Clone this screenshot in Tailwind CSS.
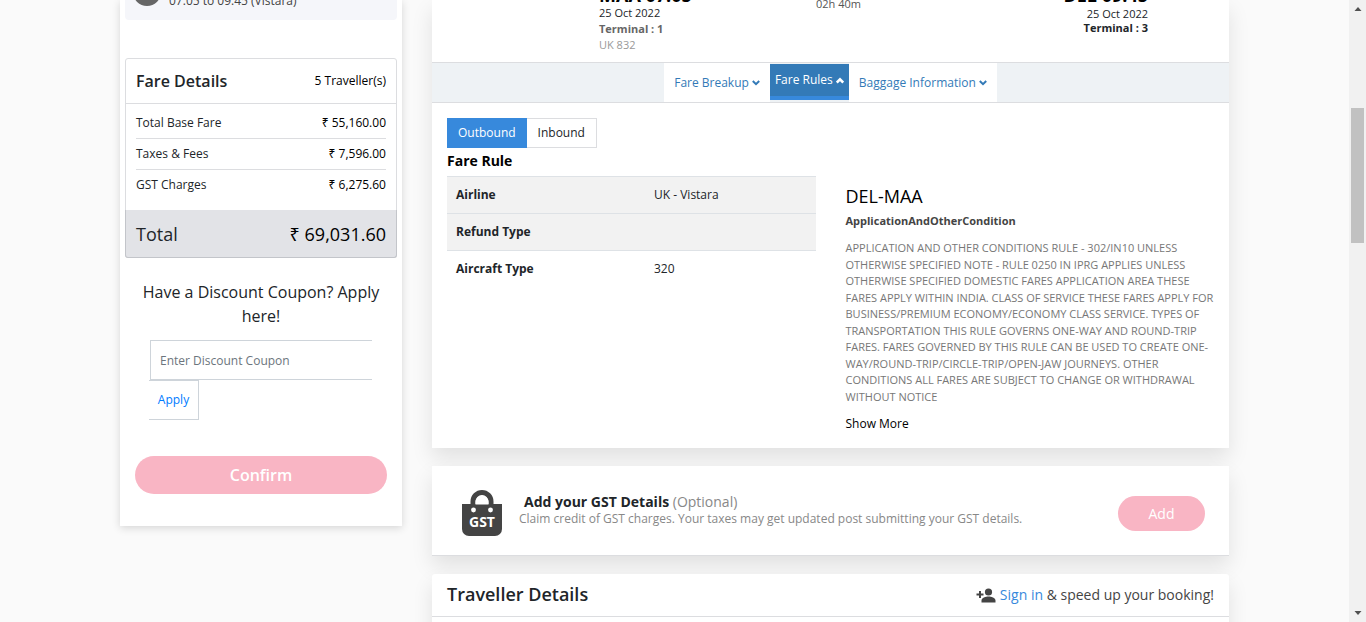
<!DOCTYPE html>
<html lang="en">
<head>
<meta charset="utf-8">
<meta name="viewport" content="width=device-width, initial-scale=1">
<title>Review your booking</title>
<script src="https://cdn.jsdelivr.net/npm/@tailwindcss/browser@4"></script>
</head>
<body class="flex h-screen overflow-hidden bg-[#fafafa] font-['Open_Sans','Noto_Sans',sans-serif] text-xs leading-4 text-[#212529]">
<main class="h-full min-w-0 flex-1 overflow-hidden">
  <div class="mx-auto flex max-w-[1109px] items-start gap-[30px]">

    <!-- Booking summary -->
    <aside class="w-[282px] shrink-0 bg-white px-[5px] pb-8 shadow-[0_2px_8px_rgba(0,0,0,0.15)]">
      <div class="flex h-5 items-end gap-2 overflow-hidden rounded-b-sm bg-[#f5f6fa] px-2">
        <span class="mb-[14px] size-7 shrink-0 rounded-full bg-[#666]"></span>
        <p class="mb-[11px] text-[#444]">07:05 to 09:45 (Vistara)</p>
      </div>

      <section class="mt-[38px] rounded-[3px] border border-[#dcdde0]">
        <header class="flex h-[45px] items-center justify-between border-b border-[#dcdde0] px-[10px]">
          <h2 class="text-base font-semibold">Fare Details</h2>
          <span class="text-black">5 Traveller(s)</span>
        </header>
        <dl class="px-[10px] pt-1 pb-[10px]">
          <div class="flex h-[31px] items-center justify-between border-b border-[#dcdde0]"><dt>Total Base Fare</dt><dd class="text-black">₹ 55,160.00</dd></div>
          <div class="flex h-[31px] items-center justify-between border-b border-[#dcdde0]"><dt>Taxes &amp; Fees</dt><dd class="text-black">₹ 7,596.00</dd></div>
          <div class="flex h-[30px] items-center justify-between"><dt>GST Charges</dt><dd class="text-black">₹ 6,275.60</dd></div>
        </dl>
        <div class="-mx-px -mb-px flex h-12 items-center justify-between rounded-b-[3px] border border-t-0 border-[#c3c5ca] bg-[#e2e3e7] px-[10px] text-lg">
          <span>Total</span><span class="text-black">₹ 69,031.60</span>
        </div>
      </section>

      <form class="px-[10px]">
        <label for="coupon" class="mt-[22px] block text-center text-base">Have a Discount Coupon? Apply here!</label>
        <div class="mt-3 px-[15px]">
          <input id="coupon" type="text" placeholder="Enter Discount Coupon" class="block h-10 w-full border border-r-0 border-[#ced4da] bg-white px-[9px] text-xs placeholder:text-[#6c757d]">
          <button type="button" class="-ml-px block h-10 w-[50px] border border-l-0 border-[#ced4da] bg-white text-xs text-[#007bff]">Apply</button>
        </div>
        <button type="button" class="mt-9 block h-[38px] w-full rounded-full bg-[#f9b5c4] text-base font-semibold text-white">Confirm</button>
      </form>
    </aside>

    <div class="flex min-w-0 flex-1 flex-col gap-[18px]">

      <!-- Flight and its fare rules -->
      <section class="bg-white pb-4 shadow-[0_10px_20px_rgba(0,0,0,0.1)]">
        <div class="flex h-[62px] items-end overflow-hidden pr-[81px] pl-[167px] text-[11px]">
          <div class="w-[217px] pb-[9px]">
            <p class="text-lg leading-5 font-bold text-black">MAA 07:05</p>
            <p>25 Oct 2022</p>
            <p class="font-bold text-[#666]">Terminal : 1</p>
            <p class="text-[#999]">UK 832</p>
          </div>
          <p class="pb-[50px] text-[#555]">02h 40m</p>
          <div class="ml-auto pb-[27px] text-right">
            <p class="text-lg leading-6 font-bold text-black">DEL 09:45</p>
            <p class="leading-[14px]">25 Oct 2022</p>
            <p class="leading-[14px] font-bold">Terminal : 3</p>
          </div>
        </div>

        <div class="flex h-[41px] justify-center border-y border-[#dcdde0] bg-[#eef2f5] text-[#337ab7]">
          <button type="button" class="flex items-center gap-[3px] bg-white px-[10px]">Fare Breakup
            <svg class="size-2" viewBox="0 0 8 8" fill="none" stroke="currentColor" stroke-width="2"><path d="M.8 2 4 5.2 7.2 2"/></svg>
          </button>
          <button type="button" class="mt-px mb-0.5 flex items-center gap-[3px] border-b-4 border-[#3789dc] bg-[#337ab7] px-[5px] text-white">Fare Rules
            <svg class="size-2" viewBox="0 0 8 8" fill="none" stroke="currentColor" stroke-width="2.500"><path d="M.8 6.500 4 3.300 7.200 6.500"/></svg>
          </button>
          <button type="button" class="flex items-center gap-[3px] bg-white px-[10px]">Baggage Information
            <svg class="size-2" viewBox="0 0 8 8" fill="none" stroke="currentColor" stroke-width="2"><path d="M.8 2 4 5.2 7.2 2"/></svg>
          </button>
        </div>

        <div class="px-[15px] pt-[15px]">
          <div class="flex h-[30px]">
            <button type="button" class="bg-[#3789dc] px-[11px] text-white">Outbound</button>
            <button type="button" class="border border-l-0 border-[#dcdde0] px-[11px]">Inbound</button>
          </div>
          <div class="grid grid-cols-2 gap-[30px]">
            <div>
              <h3 class="pb-0.5 text-sm leading-[26px] font-bold text-black">Fare Rule</h3>
              <table class="w-full table-fixed border-collapse text-left">
                <tbody>
                  <tr class="h-[37px] border-t border-[#dee2e6] bg-[#f2f2f2]"><th scope="row" class="w-[198px] px-[9px] font-bold">Airline</th><td class="px-[9px]">UK - Vistara</td></tr>
                  <tr class="h-[37px] border-t border-[#dee2e6] bg-[#f2f2f2]"><th scope="row" class="px-[9px] font-bold">Refund Type</th><td></td></tr>
                  <tr class="h-[37px] border-t border-[#dee2e6]"><th scope="row" class="px-[9px] font-bold">Aircraft Type</th><td class="px-[9px]">320</td></tr>
                </tbody>
              </table>
            </div>
            <div class="pt-9">
              <h3 class="text-lg leading-6 text-black">DEL-MAA</h3>
              <h4 class="mt-[5px] text-[11px] font-bold text-[#444]">ApplicationAndOtherCondition</h4>
              <p class="mt-[11px] text-[11px] leading-normal text-[#777]">APPLICATION AND OTHER CONDITIONS RULE - 302/IN10 UNLESS OTHERWISE SPECIFIED NOTE - RULE 0250 IN IPRG APPLIES UNLESS OTHERWISE SPECIFIED DOMESTIC FARES APPLICATION AREA THESE FARES APPLY WITHIN INDIA. CLASS OF SERVICE THESE FARES APPLY FOR BUSINESS/PREMIUM ECONOMY/ECONOMY CLASS SERVICE. TYPES OF TRANSPORTATION THIS RULE GOVERNS ONE-WAY AND ROUND-TRIP FARES. FARES GOVERNED BY THIS RULE CAN BE USED TO CREATE ONE-WAY/ROUND-TRIP/CIRCLE-TRIP/OPEN-JAW JOURNEYS. OTHER CONDITIONS ALL FARES ARE SUBJECT TO CHANGE OR WITHDRAWAL WITHOUT NOTICE</p>
              <a href="#" class="mt-[11px] block text-black">Show More</a>
            </div>
          </div>
        </div>
      </section>

      <!-- GST details -->
      <section class="flex h-[90px] items-center border-b border-[#dcdde0] bg-white pr-6 pl-[30px] shadow-[0_10px_20px_rgba(0,0,0,0.1)]">
        <svg class="mt-1 h-[46px] w-10 shrink-0" viewBox="0 0 40 46" role="img" aria-label="GST">
          <path d="M11 18v-6.500a9 9 0 0 1 18 0V18" fill="none" stroke="#444" stroke-width="5"/>
          <path d="M0 14h40v25a7 7 0 0 1-7 7H7a7 7 0 0 1-7-7z" fill="#444"/>
          <path d="M13.500 14.500V12a6.500 6.500 0 0 1 13 0v2.500z" fill="#fff"/>
          <circle cx="11.500" cy="20" r="2.400" fill="#fff"/><circle cx="28.500" cy="20" r="2.400" fill="#fff"/>
          <text x="20" y="37" text-anchor="middle" font-family="Open Sans" font-weight="700" font-size="14" fill="#fff">GST</text>
        </svg>
        <div class="ml-[17px] flex-1 pb-0.5">
          <h3 class="pl-[5px] text-sm leading-[18px] font-bold">Add your GST Details <span class="font-normal text-[#888]">(Optional)</span></h3>
          <p class="text-[#888]">Claim credit of GST charges. Your taxes may get updated post submitting your GST details.</p>
        </div>
        <button type="button" class="mt-1.5 h-[35px] w-[87px] rounded-full bg-[#f9b5c4] text-sm text-white">Add</button>
      </section>

      <!-- Travellers -->
      <section class="h-24 rounded-t-[3px] bg-white shadow-[0_10px_20px_rgba(0,0,0,0.1)]">
        <header class="flex h-[43px] items-center justify-between border-b border-[#dcdde0] px-[15px]">
          <h2 class="pb-0.5 text-lg leading-6 font-semibold">Traveller Details</h2>
          <p class="flex items-center gap-1 text-sm text-[#444]">
            <svg class="h-4 w-5" viewBox="0 0 20 16" fill="#444"><circle cx="12.500" cy="5" r="3.600"/><path d="M5.500 15.500v-2c0-2.700 4.300-4 7-4s7 1.300 7 4v2zM3 4h2v2.500h2.500v2H5V11H3V8.500H.5v-2H3z"/></svg>
            <span><a href="#" class="text-[#3789dc]">Sign in</a> &amp; speed up your booking!</span>
          </p>
        </header>
      </section>
    </div>
  </div>
</main>

<!-- Page scrollbar -->
<div class="flex h-full w-[17px] shrink-0 flex-col items-center justify-between bg-[#f1f1f1] py-1.5" aria-hidden="true">
  <svg class="h-1.5 w-2" viewBox="0 0 8 6" fill="#505050"><path d="M4 1 7.500 5H.5z"/></svg>
  <span class="mt-24 mb-auto h-[135px] w-[13px] bg-[#c1c1c1]"></span>
  <svg class="h-1.5 w-2" viewBox="0 0 8 6" fill="#505050"><path d="M4 5 .5 1h7z"/></svg>
</div>
</body>
</html>
